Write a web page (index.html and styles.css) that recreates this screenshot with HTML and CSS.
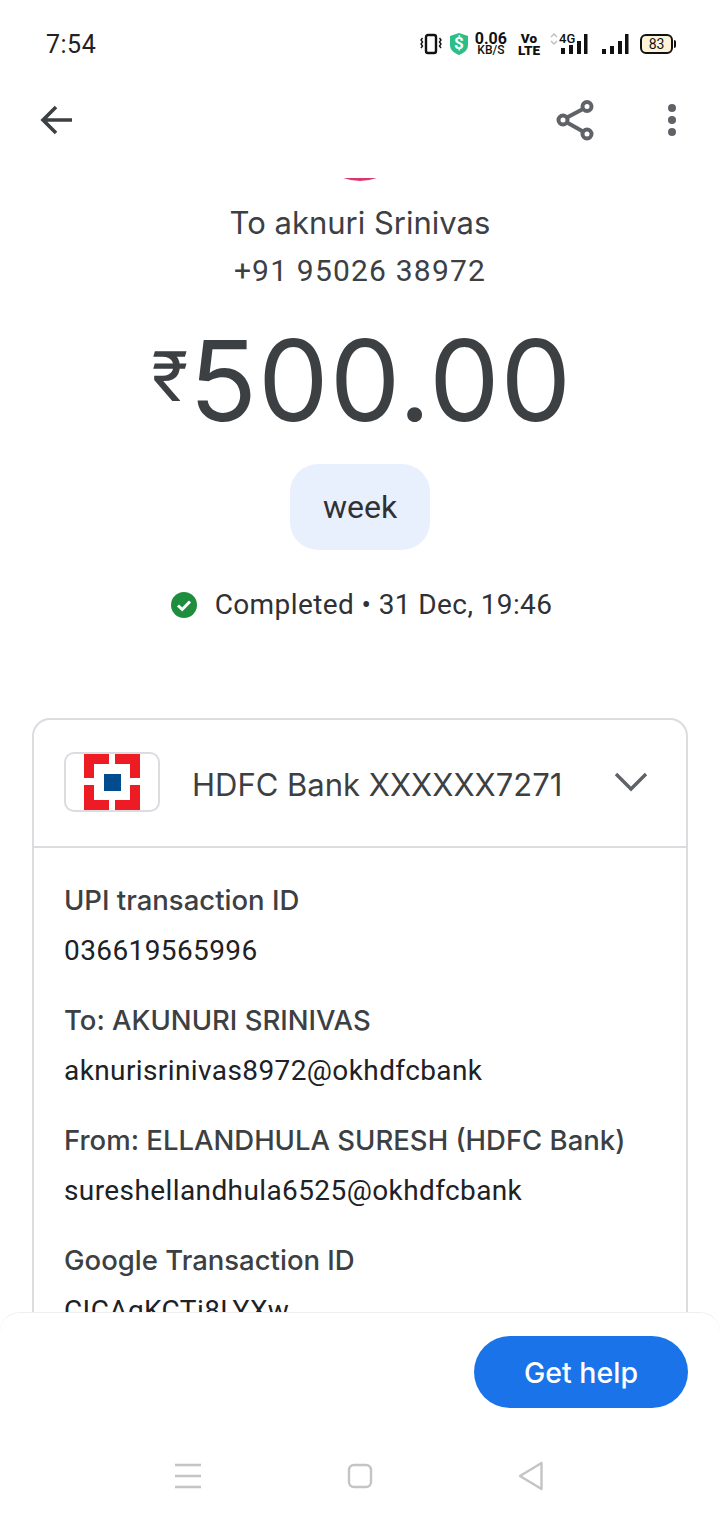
FILE: index.html
```html
<!DOCTYPE html>
<html lang="en">
<head>
  <meta charset="UTF-8" />
  <title>Transaction details</title>
  <link rel="stylesheet" href="styles.css">
</head>
<body>
  <div class="phone">
    <div class="status-bar">
      <span class="clock">7:54</span>
      <div class="status-icons">
        <svg class="ic-vibrate" width="22" height="22" viewBox="0 0 22 22">
          <rect x="6" y="2" width="10" height="18" rx="2" fill="none" stroke="#111" stroke-width="2.400"/>
          <path d="M2.500 5l-1.500 2 1.500 2-1.500 2 1.500 2-1.500 2M19.500 5l1.500 2-1.500 2 1.500 2-1.500 2 1.500 2" fill="none" stroke="#111" stroke-width="1.400"/>
        </svg>
        <div class="shield">
          <svg width="20" height="24" viewBox="0 0 20 24">
            <path d="M10 1l9 3v9c0 5-4 8-9 10-5-2-9-5-9-10V4z" fill="#2bbf85"/>
          </svg>
          <span class="shield-s">$</span>
        </div>
        <div class="speed"><span>0.06</span><span class="speed-unit">KB/S</span></div>
        <div class="volte"><span>Vo</span><span>LTE</span></div>
        <div class="net">
          <svg class="net-arrows" width="8" height="12" viewBox="0 0 8 12">
            <path d="M1 4l3-3 3 3M1 8l3 3 3-3" fill="none" stroke="#bdbdbd" stroke-width="1.400"/>
          </svg>
          <span class="net-label">4G</span>
          <svg width="30" height="22" viewBox="0 0 30 22">
            <path d="M2 15h4v6H2zM10 12h4v9h-4zM18 8h4v13h-4zM25 1h3.500v20H25z" fill="#111"/>
          </svg>
        </div>
        <svg class="ic-signal" width="28" height="22" viewBox="0 0 28 22">
          <path d="M1 16h4v5H1zM9 13h4v8H9zM17 8h4v13h-4zM24 1h3.500v20H24z" fill="#111"/>
        </svg>
        <div class="battery"><span>83</span></div>
      </div>
    </div>

    <div class="app-bar">
      <svg width="40" height="40" viewBox="0 0 40 40">
        <path d="M35 20H7M19 7L6 20l13 13" fill="none" stroke="#3c4043" stroke-width="3.600"/>
      </svg>
      <div class="app-actions">
        <svg width="40" height="44" viewBox="0 0 40 44">
          <g fill="none" stroke="#5f6368" stroke-width="4">
            <circle cx="31" cy="8.500" r="4.500"/>
            <circle cx="7" cy="22" r="4.500"/>
            <circle cx="31" cy="36" r="4.500"/>
            <path d="M11 19.500L27 11M11 24.500L27 33.500"/>
          </g>
        </svg>
        <svg width="12" height="36" viewBox="0 0 12 36">
          <circle cx="6" cy="6" r="4" fill="#5f6368"/>
          <circle cx="6" cy="18" r="4" fill="#5f6368"/>
          <circle cx="6" cy="30" r="4" fill="#5f6368"/>
        </svg>
      </div>
    </div>

    <div class="scroll-area">
      <div class="avatar"></div>
      <div class="payee">To aknuri Srinivas</div>
      <div class="phone-no">+91 95026 38972</div>
      <div class="amount"><span class="rupee">₹</span>500.00</div>
      <div class="note">week</div>
      <div class="state">
        <svg width="28" height="28" viewBox="0 0 28 28">
          <circle cx="14" cy="14" r="13" fill="#1e8e3e"/>
          <path d="M8 14.500l4.200 4L20 10.500" fill="none" stroke="#fff" stroke-width="3"/>
        </svg>
        <span>Completed • 31 Dec, 19:46</span>
      </div>

      <div class="card">
        <div class="card-head">
          <div class="bank-logo">
            <svg width="56" height="56" viewBox="0 0 56 56">
              <path d="M0 0h25v10H10v14H0zM31 0h25v24H46V10H31zM0 31h10v15h15v10H0zM46 31h10v25H31V46h15z" fill="#ed1c24"/>
              <rect x="20" y="20" width="17" height="17" fill="#004c8f"/>
            </svg>
          </div>
          <span class="bank-name">HDFC Bank XXXXXX7271</span>
          <svg class="chevron" width="34" height="20" viewBox="0 0 34 20">
            <path d="M2 2l15 15L32 2" fill="none" stroke="#5f6368" stroke-width="3.400"/>
          </svg>
        </div>
        <div class="card-body">
          <div class="info">
            <div class="info-label">UPI transaction ID</div>
            <div class="info-value">036619565996</div>
          </div>
          <div class="info">
            <div class="info-label">To: AKUNURI SRINIVAS</div>
            <div class="info-value">aknurisrinivas8972@okhdfcbank</div>
          </div>
          <div class="info">
            <div class="info-label">From: ELLANDHULA SURESH (HDFC Bank)</div>
            <div class="info-value">sureshellandhula6525@okhdfcbank</div>
          </div>
          <div class="info">
            <div class="info-label">Google Transaction ID</div>
            <div class="info-value">CICAgKCTi8LYXw</div>
          </div>
        </div>
      </div>
    </div>

    <div class="sheet">
      <div class="sheet-actions">
        <button class="help-btn">Get help</button>
      </div>
      <div class="nav-bar">
        <svg width="28" height="26" viewBox="0 0 28 26">
          <path d="M1 2h26M1 13h26M1 24h26" stroke="#c4c4c4" stroke-width="2.400"/>
        </svg>
        <svg width="26" height="26" viewBox="0 0 26 26">
          <rect x="2" y="2" width="22" height="22" rx="5" fill="none" stroke="#c4c4c4" stroke-width="2.400"/>
        </svg>
        <svg width="26" height="30" viewBox="0 0 26 30">
          <path d="M23.500 2L2 15l21.500 13z" fill="none" stroke="#c4c4c4" stroke-width="2.400" stroke-linejoin="round"/>
        </svg>
      </div>
    </div>
  </div>
</body>
</html>
```

FILE: styles.css
```css
body {
  margin: 0;
  background: #fff;
  font-family: Roboto, Arial, sans-serif;
  color: #3c4043;
}

.phone {
  display: flex;
  flex-direction: column;
  width: 720px;
  height: 1520px;
  overflow: hidden;
}

/* status bar */
.status-bar {
  display: flex;
  align-items: center;
  justify-content: space-between;
  height: 88px;
  padding: 0 47px 0 46px;
  box-sizing: border-box;
  flex-shrink: 0;
}

.clock {
  font-size: 25px;
  color: #222;
  letter-spacing: 0.5px;
}

.status-icons {
  display: flex;
  align-items: center;
  gap: 7px;
  color: #111;
}

.shield {
  position: relative;
  width: 20px;
  height: 24px;
}

.shield-s {
  position: absolute;
  inset: 0;
  text-align: center;
  color: #fff;
  font-size: 17px;
  line-height: 23px;
  font-weight: 700;
}

.speed {
  display: flex;
  flex-direction: column;
  align-items: center;
  font-size: 16px;
  line-height: 13px;
  font-weight: 700;
  margin-left: -1px;
}

.speed-unit {
  font-size: 12px;
  line-height: 11px;
  font-weight: 500;
}

.volte {
  display: flex;
  flex-direction: column;
  align-items: center;
  font-size: 13.500px;
  line-height: 12px;
  font-weight: 900;
  margin-left: 4px;
}

.net {
  position: relative;
  padding-left: 9px;
  margin-left: 3px;
}

.net svg {
  display: block;
}

.net-arrows {
  position: absolute;
  left: 0;
  top: 0;
}

.net-label {
  position: absolute;
  left: 9px;
  top: 0;
  font-size: 13px;
  line-height: 12px;
  font-weight: 500;
}

.ic-signal {
  margin-left: 5px;
}

.battery {
  width: 29px;
  height: 16px;
  border: 2px solid #111;
  border-radius: 6px;
  background: #fdf3d8;
  font-size: 14px;
  line-height: 16px;
  text-align: center;
  margin-left: 4px;
  position: relative;
}

.battery:after {
  content: "";
  position: absolute;
  right: -5px;
  top: 4px;
  width: 2px;
  height: 8px;
  background: #111;
  border-radius: 0 2px 2px 0;
}

/* app bar */
.app-bar {
  display: flex;
  align-items: center;
  justify-content: space-between;
  height: 64px;
  padding: 0 42px 0 37px;
  flex-shrink: 0;
}

.app-bar svg {
  display: block;
}

.app-actions {
  display: flex;
  align-items: center;
  gap: 70px;
}

.scroll-area {
  flex: 1;
  margin-top: 26px;
  overflow: hidden;
  display: flex;
  flex-direction: column;
  align-items: center;
  min-height: 0;
}

.avatar {
  width: 96px;
  height: 96px;
  border-radius: 50%;
  margin-top: -93px;
  background: #d9386d;
  flex-shrink: 0;
}

.payee {
  margin-top: 18px;
  font-family: Inter, Roboto, sans-serif;
  font-size: 31px;
  line-height: 48px;
}

.phone-no {
  font-size: 30px;
  line-height: 48px;
  letter-spacing: 1.2px;
}

.amount {
  margin-top: 14px;
  padding-left: 4px;
  font-family: Inter, Roboto, sans-serif;
  font-size: 112px;
  line-height: 136px;
  letter-spacing: 1px;
}

.rupee {
  font-family: Roboto, sans-serif;
  font-size: 70px;
  vertical-align: 20px;
}

.note {
  margin-top: 16px;
  width: 140px;
  height: 86px;
  border-radius: 28px;
  background: #e8f0fe;
  color: #303134;
  font-size: 32px;
  line-height: 86px;
  text-align: center;
  flex-shrink: 0;
}

.state {
  display: flex;
  align-items: center;
  gap: 17px;
  margin-top: 35px;
  padding-left: 2px;
  color: #303134;
  font-size: 28px;
  line-height: 40px;
  letter-spacing: 0.4px;
}

.state svg {
  flex-shrink: 0;
}

/* bank card */
.card {
  width: 656px;
  margin-top: 93px;
  box-sizing: border-box;
  border: 2px solid #dadce0;
  border-radius: 18px;
  flex-shrink: 0;
}

.card-head {
  display: flex;
  align-items: center;
  height: 126px;
  padding: 0 38px 0 30px;
  border-bottom: 2px solid #dadce0;
}

.bank-logo {
  display: flex;
  align-items: center;
  justify-content: center;
  width: 96px;
  height: 60px;
  box-sizing: border-box;
  border: 2px solid #dadce0;
  border-radius: 10px;
  margin: -2px 32px 0 0;
}

.bank-name {
  flex: 1;
  margin-top: 3px;
  font-family: Inter, Roboto, sans-serif;
  font-size: 31px;
}

.chevron {
  margin-top: -2px;
}

.card-body {
  padding: 28px 30px;
}

.info {
  margin-bottom: 20px;
}

.info-label {
  font-family: Inter, Roboto, sans-serif;
  font-size: 27.500px;
  line-height: 48px;
  padding-bottom: 2px;
  font-weight: 500;
}

.info-value {
  color: #202124;
  font-size: 28px;
  line-height: 50px;
  letter-spacing: 0.4px;
}

/* bottom sheet */
.sheet {
  flex-shrink: 0;
  height: 208px;
  box-sizing: border-box;
  border-top: 1px solid #eeeeee;
  border-radius: 20px 20px 0 0;
  background: #fff;
}

.sheet-actions {
  display: flex;
  justify-content: flex-end;
  padding: 23px 32px 0 0;
}

.help-btn {
  width: 214px;
  height: 72px;
  border: none;
  border-radius: 36px;
  background: #1a73e8;
  color: #fff;
  font-family: Inter, Roboto, sans-serif;
  font-size: 28.500px;
  font-weight: 500;
}

.nav-bar {
  display: flex;
  justify-content: space-between;
  align-items: center;
  width: 370px;
  margin: 53px 0 0 174px;
}
```
